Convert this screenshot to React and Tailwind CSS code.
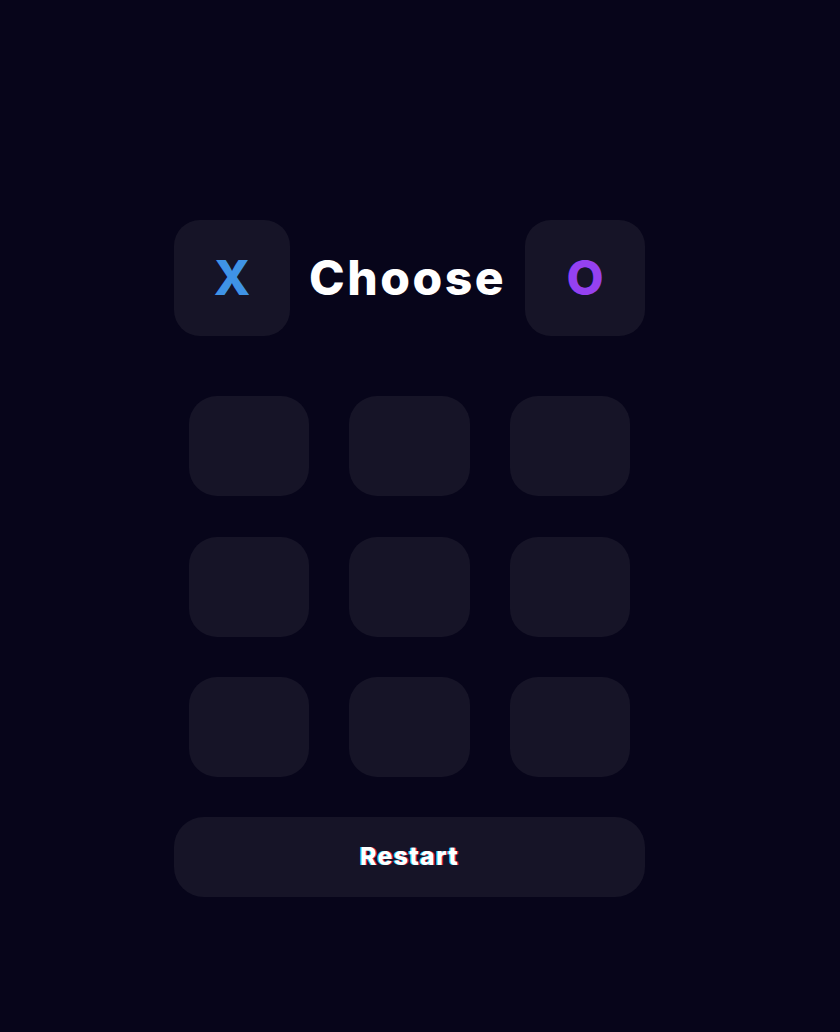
import React, { useState } from "react";

const Cell = ({ value, onClick }) => (
  <button
    onClick={onClick}
    className="h-[100px] w-full rounded-[28px] bg-[#161427] text-[48px] font-extrabold"
  >
    {value === "X" && <span className="text-[#3f93e6]">X</span>}
    {value === "O" && <span className="text-[#9541f0]">O</span>}
  </button>
);

const App = () => {
  const [board, setBoard] = useState(Array(9).fill(""));
  const [turn, setTurn] = useState("X");

  const play = (i) => {
    if (board[i]) return;
    const next = [...board];
    next[i] = turn;
    setBoard(next);
    setTurn(turn === "X" ? "O" : "X");
  };

  const restart = () => {
    setBoard(Array(9).fill(""));
    setTurn("X");
  };

  return (
    <div
      className="min-h-[1032px] w-full bg-[#07051a] text-white"
      style={{ fontFamily: "Inter, 'Liberation Sans', sans-serif" }}
    >
      <div className="flex w-[819px] justify-center pt-[220px]">
        <div className="flex w-[471px] flex-col items-center">
          <div className="flex w-full items-center justify-between">
            <button
              onClick={() => setTurn("X")}
              className="flex h-[116px] w-[116px] items-center justify-center rounded-[26px] bg-[#161427] text-[48px] font-extrabold text-[#3f93e6]"
            >
              X
            </button>
            <h1 className="text-[48px] font-extrabold leading-none tracking-[2.5px]">
              Choose
            </h1>
            <button
              onClick={() => setTurn("O")}
              className="flex h-[116px] w-[120px] items-center justify-center rounded-[26px] bg-[#161427] text-[48px] font-extrabold text-[#9541f0]"
            >
              O
            </button>
          </div>

          <div className="mt-[60px] grid w-[441px] grid-cols-3 gap-x-[40px] gap-y-[40.5px]">
            {board.map((v, i) => (
              <Cell key={i} value={v} onClick={() => play(i)} />
            ))}
          </div>

          <button
            onClick={restart}
            className="mt-[40px] h-[80px] w-full rounded-[30px] bg-[#161427] text-[25px] font-extrabold tracking-[1.2px] [text-shadow:-1px_0_#22d3ee,1px_0_#e11d48]"
          >
            Restart
          </button>
        </div>
      </div>
    </div>
  );
};

export default App;
